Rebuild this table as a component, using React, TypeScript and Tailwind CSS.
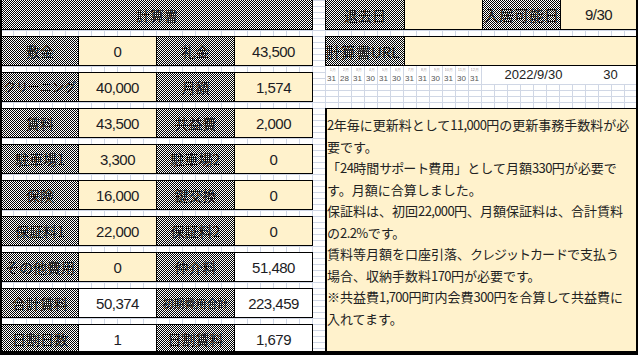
import React from "react";

const checker =
  "bg-[repeating-conic-gradient(#000_0_25%,#fff_0_50%)] bg-size-[2px_2px]";
const jp = "font-['Noto_Sans_CJK_JP',sans-serif]";
const num = "font-['Liberation_Sans',sans-serif]";

type Row = [string, string, boolean, string, string, boolean];

const rows: Row[] = [
  ["敷金", "0", true, "礼金", "43,500", true],
  ["クリーニング", "40,000", true, "月額", "1,574", true],
  ["賃料", "43,500", true, "共益費", "2,000", true],
  ["駐車場1", "3,300", true, "駐車場2", "0", true],
  ["保険", "16,000", true, "鍵交換", "0", true],
  ["保証料1", "22,000", true, "保証料2", "0", true],
  ["その他費用", "0", true, "仲介料", "51,480", false],
  ["合計賃料", "50,374", false, "初期費用合計", "223,459", false],
  ["日割日数", "1", false, "日割賃料", "1,679", false],
];

const labelSize: Record<string, string> = {
  クリーニング: "text-[12px]",
  初期費用合計: "text-[11px]",
};

const months = [
  ["1月", "31"],
  ["2月", "28"],
  ["3月", "31"],
  ["4月", "30"],
  ["5月", "31"],
  ["6月", "30"],
  ["7月", "31"],
  ["8月", "31"],
  ["9月", "30"],
  ["10月", "31"],
  ["11月", "30"],
  ["12月", "31"],
];

const notes = [
  "2年毎に更新料として11,000円の更新事務手数料が必",
  "要です。",
  "「24時間サポート費用」として月額330円が必要で",
  "す。月額に合算しました。",
  "保証料は、初回22,000円、月額保証料は、合計賃料",
  "の2.2%です。",
  "賃料等月額を口座引落、クレジットカードで支払う",
  "場合、収納手数料170円が必要です。",
  "※共益費1,700円町内会費300円を合算して共益費に",
  "入れてます。",
];

function Label({
  text,
  className = "",
  size = "text-[14px]",
}: {
  text: string;
  className?: string;
  size?: string;
}) {
  return (
    <div
      className={`${checker} ${jp} ${size} flex shrink-0 items-center justify-center overflow-hidden whitespace-nowrap leading-none text-[#1a1a1a] ${className}`}
    >
      {text}
    </div>
  );
}

function Value({
  v,
  cream,
  className = "",
}: {
  v: string;
  cream: boolean;
  className?: string;
}) {
  return (
    <div
      className={`${cream ? "bg-[#fff2cc]" : "bg-white"} ${num} flex shrink-0 items-center justify-center text-[15px] leading-none tracking-[-0.5px] text-[#1c1c24] ${className}`}
    >
      {v}
    </div>
  );
}

// ascii and katakana runs sit tighter, like the sheet's proportional font
function NoteLine({ text }: { text: string }) {
  const parts = text.split(/([\x20-\x7e]+|[\u30a1-\u30fa]+)/);
  return (
    <div className="whitespace-nowrap">
      {parts.map((p, i) => {
        if (/^[\x20-\x7e]+$/.test(p))
          return (
            <span key={i} className="tracking-[-0.6px]">
              {p}
            </span>
          );
        if (/^[\u30a1-\u30fa]+$/.test(p))
          return (
            <span key={i} className="tracking-[-1px]">
              {p}
            </span>
          );
        return <span key={i}>{p}</span>;
      })}
    </div>
  );
}

function LeftBlock() {
  return (
    <div className="flex w-[311px] shrink-0 flex-col gap-[6px]">
      <Label
        text="計算書"
        className="h-[30px] w-[311px] border-r border-b border-black"
      />
      {rows.map((r) => (
        <div
          key={r[0]}
          className="flex h-[30px] shrink-0 border-y border-r border-black"
        >
          <Label text={r[0]} size={labelSize[r[0]]} className="w-[76px]" />
          <Value v={r[1]} cream={r[2]} className="w-[78px] border-l border-black" />
          <Label
            text={r[3]}
            size={labelSize[r[3]]}
            className="w-[78px] border-l border-black"
          />
          <Value v={r[4]} cream={r[5]} className="w-[78px] border-l border-black" />
        </div>
      ))}
    </div>
  );
}

function RightBlock() {
  return (
    <div className="flex w-[311px] shrink-0 flex-col">
      <div className="flex h-[30px] shrink-0 border-b border-l border-black">
        <Label text="退去日" className="w-[78px]" />
        <Value v="" cream className="w-[78px] border-l border-black" />
        <Label
          text="入居可能日"
          size="text-[15px]"
          className="w-[78px] border-l border-black"
        />
        <Value v="9/30" cream className="flex-1 border-l border-black" />
      </div>
      <div className="mt-[6px] flex h-[30px] shrink-0 border-y border-l border-black">
        <Label
          text="計算書URL"
          size="text-[15px]"
          className="w-[78px] justify-start"
        />
        <Value v="" cream className="flex-1 border-l border-black" />
      </div>
      <div className="flex h-[18px] shrink-0">
        {months.map(([m, d]) => (
          <div
            key={m}
            className={`${num} flex w-[13px] shrink-0 flex-col items-end overflow-hidden whitespace-nowrap border-l border-[#d0d7e5] bg-white pr-[2px]`}
          >
            <span className="mt-[1px] block h-[6px] overflow-hidden text-[4px] leading-[6px] text-[#a89c9c]">
              {m}
            </span>
            <span className="mt-[1px] block h-[9px] text-[8px] leading-[9px] text-[#555]">
              {d}
            </span>
          </div>
        ))}
        <div
          className={`${num} flex w-[104px] shrink-0 items-center justify-center border-l border-[#d0d7e5] bg-white text-[13px] text-[#222]`}
        >
          2022/9/30
        </div>
        <div
          className={`${num} flex flex-1 items-center justify-center bg-white text-[13px] text-[#222]`}
        >
          30
        </div>
      </div>
      <div className="h-[24px] shrink-0" />
      <div
        className={`${jp} flex-1 overflow-hidden border-t border-l-2 border-black bg-[#fff2cc] pt-[5px] text-[13px] leading-[21.5px] text-[#222]`}
      >
        {notes.map((n) => (
          <NoteLine key={n} text={n} />
        ))}
      </div>
    </div>
  );
}

export default function App() {
  return (
    <div className="h-[355px] w-[638px] overflow-hidden border-x-2 border-b-4 border-black bg-white">
      <div className="flex h-full gap-[12px] bg-white bg-[linear-gradient(to_right,#d0d7e5_1px,transparent_1px),linear-gradient(to_bottom,#d0d7e5_1px,transparent_1px)] bg-size-[13px_6px] bg-position-[-2px_0]">
        <LeftBlock />
        <RightBlock />
      </div>
    </div>
  );
}
